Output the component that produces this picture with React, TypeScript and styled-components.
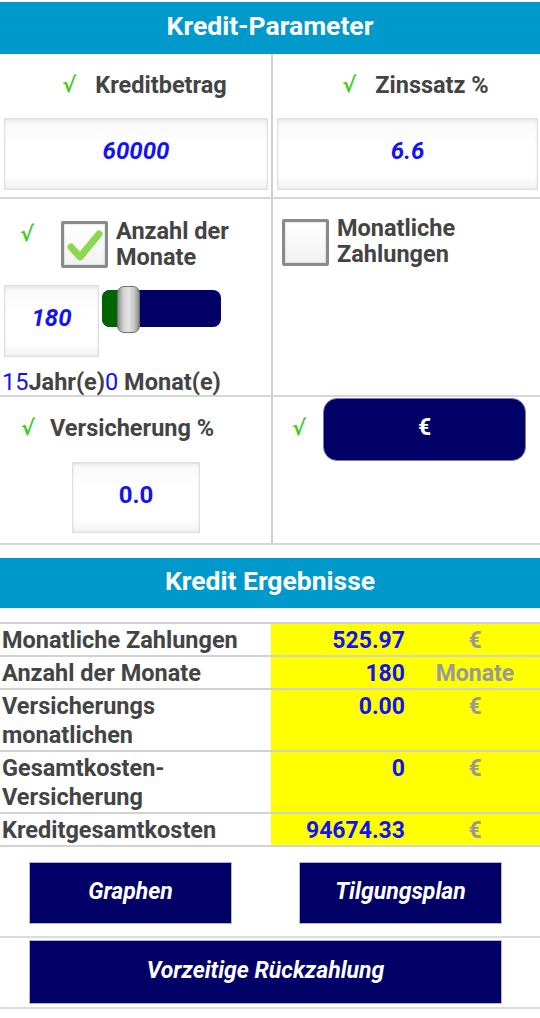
import React from "react";
import styled, { createGlobalStyle } from "styled-components";

const Global = createGlobalStyle`
  html, body { margin: 0; padding: 0; background: #fff; }
  body { font-family: Roboto, "Noto Sans", "Liberation Sans", sans-serif; width: 540px; }
  * { box-sizing: border-box; }
`;

const Page = styled.div`
  width: 540px;
  padding-top: 2px;
  display: flex;
  flex-direction: column;
`;

const Header = styled.div<{ $h: number }>`
  height: ${(p) => p.$h}px;
  background: #0099cc;
  color: #fff;
  font-weight: 700;
  font-size: 26.5px;
  display: flex;
  align-items: center;
  justify-content: center;
  padding-bottom: 6px;
`;

const ParamRow = styled.div<{ $h: number }>`
  display: grid;
  grid-template-columns: 273px 1fr;
  height: ${(p) => p.$h}px;
  border-bottom: 2px solid #d6d6d6;
`;

const Cell = styled.div<{ $left?: boolean }>`
  display: flex;
  flex-direction: column;
  min-width: 0;
  ${(p) => (p.$left ? "border-right: 2px solid #d0d0d0;" : "")}
`;

const LabelLine = styled.div`
  height: 62px;
  display: flex;
  align-items: center;
  justify-content: center;
  padding-left: 18px;
  gap: 19px;
`;

const Check = styled.span`
  color: #3fcb1a;
  font-family: "DejaVu Sans", sans-serif;
  font-weight: 700;
  font-size: 21px;
  line-height: 22px;
`;

const Label = styled.span`
  color: #444;
  font-weight: 700;
  font-size: 23.5px;
  line-height: 26px;
`;

const InputBox = styled.div<{ $w?: number; $h: number; $italic?: boolean }>`
  ${(p) => (p.$w ? `width: ${p.$w}px;` : "")}
  height: ${(p) => p.$h}px;
  border: 1px solid #dedede;
  background: linear-gradient(#ececec 0px, #fafafa 5px, #fff 40%, #fff 80%, #f3f3f3 100%);
  box-shadow: inset 0 0 3px rgba(0, 0, 0, 0.08);
  display: flex;
  align-items: center;
  justify-content: center;
  padding-bottom: 6px;
  color: #1212f5;
  font-weight: 700;
  font-size: 24px;
  font-style: ${(p) => (p.$italic ? "italic" : "normal")};
`;

const BoxWrap = styled.div<{ $ml: number; $mr: number; $mt: number }>`
  margin: ${(p) => p.$mt}px ${(p) => p.$mr}px 0 ${(p) => p.$ml}px;
`;

const CheckRow = styled.div<{ $pt: number; $pl: number }>`
  display: flex;
  align-items: flex-start;
  padding: ${(p) => p.$pt}px 0 0 ${(p) => p.$pl}px;
`;

const SmallCheck = styled(Check)`
  margin-top: 2px;
  width: 41px;
`;

const Box = styled.div`
  width: 47px;
  height: 47px;
  flex: none;
  border: 3px solid #8a8a8a;
  border-radius: 2px;
  background: linear-gradient(#fff, #f2f2f2);
  box-shadow: inset 0 0 2px rgba(0, 0, 0, 0.25);
  display: flex;
  align-items: center;
  justify-content: center;
`;

const BoxLabel = styled(Label)<{ $mt: number }>`
  margin-left: 8px;
  margin-top: ${(p) => p.$mt}px;
`;

const SliderLine = styled.div`
  display: flex;
  align-items: flex-start;
  margin-top: 15px;
  padding-left: 4px;
  gap: 3px;
`;

const Track = styled.div`
  position: relative;
  width: 119px;
  height: 37px;
  margin-top: 5px;
  border-radius: 8px;
  background: #000066;
`;

const TrackFill = styled.div`
  position: absolute;
  left: 0;
  top: 0;
  height: 37px;
  border-radius: 8px 0 0 8px;
  background: #006400;
`;

const Thumb = styled.div`
  position: absolute;
  top: -4px;
  width: 23px;
  height: 47px;
  border-radius: 7px;
  border: 1px solid #6e6e6e;
  background: linear-gradient(90deg, #8d8d8d 0%, #d0d0d0 25%, #e4e4e4 50%, #c4c4c4 78%, #8a8a8a 100%);
`;

const YearText = styled.div`
  margin-top: 12px;
  padding-left: 2px;
  font-size: 23.5px;
  line-height: 26px;
  font-weight: 700;
  color: #444;
`;

const Blue = styled.span`
  color: #1212f5;
  font-weight: 400;
`;

const InsLine = styled.div`
  display: flex;
  align-items: center;
  height: 64px;
  padding-left: 21px;
  gap: 15px;
  padding-bottom: 2px;
`;

const EuroLine = styled.div`
  display: flex;
  align-items: flex-start;
  padding: 1px 0 0 19px;
`;

const EuroCheck = styled(Check)`
  margin-top: 19px;
  width: 31px;
`;

const EuroButton = styled.div`
  width: 203px;
  height: 63px;
  border-radius: 14px;
  background: #000066;
  border: 1px solid #7a7ab0;
  color: #fff;
  font-weight: 700;
  font-size: 23px;
  display: flex;
  align-items: center;
  justify-content: center;
  padding-bottom: 5px;
`;

const Gap = styled.div<{ $h: number }>`
  height: ${(p) => p.$h}px;
`;

const Table = styled.div`
  border-top: 2px solid #d2d2d2;
  display: flex;
  flex-direction: column;
`;

const TRow = styled.div`
  display: grid;
  grid-template-columns: 271px 139px 1fr;
  border-bottom: 2px solid #d2d2d2;
`;

const cellText = `
  font-weight: 700;
  font-size: 23px;
  line-height: 29px;
  padding-top: 2px;
  padding-bottom: 0;
`;

const TLabel = styled.div`
  ${cellText}
  padding-left: 2px;
  color: #444;
  font-size: 23.5px;
`;

const TValue = styled.div`
  ${cellText}
  background: #ffff00;
  padding-right: 5px;
  text-align: right;
  color: #1212f5;
`;

const TUnit = styled.div`
  ${cellText}
  background: #ffff00;
  text-align: center;
  color: #999;
`;

const ButtonRow = styled.div<{ $pt: number; $pb: number }>`
  display: flex;
  gap: 67px;
  padding: ${(p) => p.$pt}px 0 ${(p) => p.$pb}px 29px;
  border-bottom: 2px solid #dcdcdc;
`;

const NavButton = styled.div<{ $w: number; $h: number }>`
  width: ${(p) => p.$w}px;
  height: ${(p) => p.$h}px;
  background: #000066;
  border: 1px solid #b4b4d8;
  color: #fff;
  font-weight: 700;
  font-style: italic;
  font-size: 23px;
  display: flex;
  align-items: center;
  justify-content: center;
  padding-bottom: 4px;
`;

const results: [string, string, string][] = [
  ["Monatliche Zahlungen", "525.97", "€"],
  ["Anzahl der Monate", "180", "Monate"],
  ["Versicherungs monatlichen", "0.00", "€"],
  ["Gesamtkosten- Versicherung", "0", "€"],
  ["Kreditgesamtkosten", "94674.33", "€"],
];

export default function App() {
  return (
    <Page>
      <Global />
      <Header $h={52}>Kredit-Parameter</Header>

      <ParamRow $h={145}>
        <Cell $left>
          <LabelLine>
            <Check>√</Check>
            <Label>Kreditbetrag</Label>
          </LabelLine>
          <BoxWrap $ml={4} $mr={3} $mt={2}>
            <InputBox $h={72} $italic>60000</InputBox>
          </BoxWrap>
        </Cell>
        <Cell>
          <LabelLine>
            <Check>√</Check>
            <Label>Zinssatz %</Label>
          </LabelLine>
          <BoxWrap $ml={4} $mr={2} $mt={2}>
            <InputBox $h={72} $italic>6.6</InputBox>
          </BoxWrap>
        </Cell>
      </ParamRow>

      <ParamRow $h={198}>
        <Cell $left>
          <CheckRow $pt={22} $pl={20}>
            <SmallCheck>√</SmallCheck>
            <Box>
              <svg width="41" height="41" viewBox="0 0 41 41">
                <path
                  d="M7 23 L16 33 L35 10"
                  fill="none"
                  stroke="#8cd84e"
                  strokeWidth="7"
                  strokeLinecap="round"
                  strokeLinejoin="round"
                />
              </svg>
            </Box>
            <BoxLabel $mt={-3}>
              Anzahl der
              <br />
              Monate
            </BoxLabel>
          </CheckRow>
          <SliderLine>
            <InputBox $w={95} $h={72} $italic>
              180
            </InputBox>
            <Track>
              <TrackFill style={{ width: 18 }} />
              <Thumb style={{ left: 15 }} />
            </Track>
          </SliderLine>
          <YearText>
            <Blue>15</Blue>Jahr(e)<Blue>0</Blue> Monat(e)
          </YearText>
        </Cell>
        <Cell>
          <CheckRow $pt={20} $pl={9}>
            <Box />
            <BoxLabel $mt={-4}>
              Monatliche
              <br />
              Zahlungen
            </BoxLabel>
          </CheckRow>
        </Cell>
      </ParamRow>

      <ParamRow $h={148}>
        <Cell $left>
          <InsLine>
            <Check>√</Check>
            <Label>Versicherung %</Label>
          </InsLine>
          <BoxWrap $ml={72} $mr={71} $mt={1}>
            <InputBox $h={71}>0.0</InputBox>
          </BoxWrap>
        </Cell>
        <Cell>
          <EuroLine>
            <EuroCheck>√</EuroCheck>
            <EuroButton>€</EuroButton>
          </EuroLine>
        </Cell>
      </ParamRow>

      <Gap $h={13} />
      <Header $h={50}>Kredit Ergebnisse</Header>
      <Gap $h={14} />

      <Table>
        {results.map(([l, v, u]) => (
          <TRow key={l}>
            <TLabel>{l}</TLabel>
            <TValue>{v}</TValue>
            <TUnit>{u}</TUnit>
          </TRow>
        ))}
      </Table>

      <ButtonRow $pt={15} $pb={12}>
        <NavButton $w={203} $h={62}>Graphen</NavButton>
        <NavButton $w={203} $h={62}>Tilgungsplan</NavButton>
      </ButtonRow>
      <ButtonRow $pt={2} $pb={3}>
        <NavButton $w={473} $h={64}>Vorzeitige Rückzahlung</NavButton>
      </ButtonRow>
    </Page>
  );
}
